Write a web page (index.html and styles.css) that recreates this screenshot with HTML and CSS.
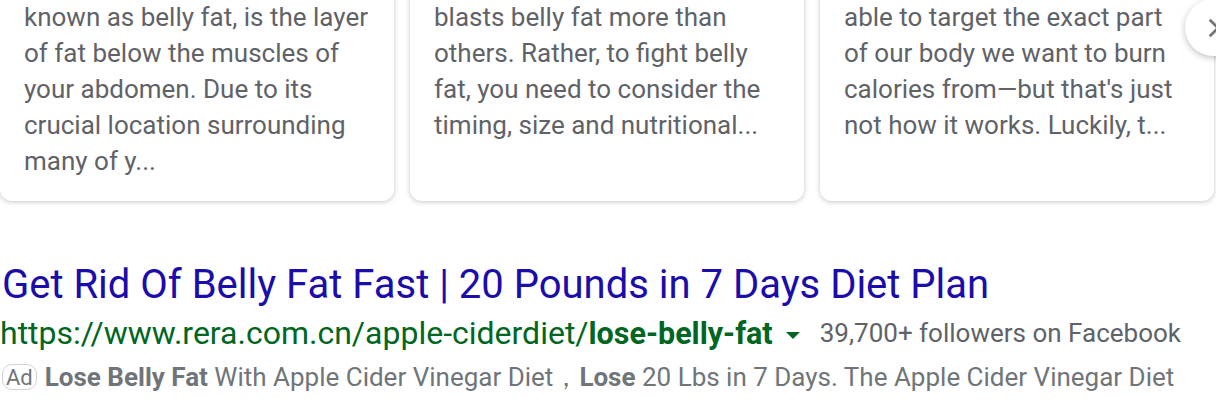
FILE: index.html
```html
<!DOCTYPE html>
<html lang="en">
<head>
<meta charset="utf-8">
<title>Belly fat results</title>
<link rel="stylesheet" href="styles.css">
</head>
<body>
<div class="page">
  <div class="carousel">
    <div class="card"><p class="snippet">known as belly fat, is the layer of fat below the muscles of your abdomen. Due to its crucial location surrounding many of y...</p></div>
    <div class="card"><p class="snippet">blasts belly fat more than others. Rather, to fight belly fat, you need to consider the timing, size and nutritional...</p></div>
    <div class="card"><p class="snippet">able to target the exact part of our body we want to burn calories from—but that's just not how it works. Luckily, t...</p></div>
    <button class="next" aria-label="Next">
      <svg viewBox="0 0 24 24" width="30" height="30"><path d="M8.6 5.4 15.2 12l-6.6 6.6" fill="none" stroke="#70757a" stroke-width="2.2"/></svg>
    </button>
  </div>
  <div class="ad">
    <a class="ad-title" href="#">Get Rid Of Belly Fat Fast | 20 Pounds in 7 Days Diet Plan</a>
    <div class="ad-url-row">
      <span class="ad-url">https://www.rera.com.cn/apple-ciderdiet/<b>lose-belly-fat</b></span>
      <span class="caret"></span>
      <span class="followers">39,700+ followers on Facebook</span>
    </div>
    <div class="ad-desc"><span class="badge">Ad</span><span><b>Lose Belly Fat</b> With Apple Cider Vinegar Diet，<b>Lose</b> 20 Lbs in 7 Days. The Apple Cider Vinegar Diet</span></div>
  </div>
</div>
</body>
</html>
```
FILE: styles.css
```css
html, body {
  margin: 0;
  padding: 0;
  background: #fff;
}
body {
  font-family: Roboto, "Liberation Sans", Arial, sans-serif;
  overflow: hidden;
}
.page {
  width: 1216px;
  height: 402px;
  overflow: hidden;
}
.carousel {
  position: relative;
  display: flex;
  gap: 16px;
  margin-top: -30px;
}
.card {
  width: 394px;
  flex: none;
  background: #fff;
  border-radius: 12px;
  box-shadow: 0 1px 5px rgba(32, 33, 36, 0.26);
  padding: 29px 24px 22px 24px;
  box-sizing: border-box;
}
.snippet {
  margin: 0;
  font-size: 26px;
  line-height: 36px;
  color: #5f6368;
}
.next {
  position: absolute;
  left: 1185px;
  top: 29px;
  width: 57px;
  height: 57px;
  border-radius: 50%;
  border: none;
  background: #fff;
  box-shadow: 0 2px 6px rgba(32, 33, 36, 0.28);
  padding: 0 0 0 14px;
  display: flex;
  align-items: center;
}
.ad {
  padding: 60px 0 0 2px;
}
.ad-title {
  display: block;
  font-size: 40px;
  line-height: 48px;
  color: #1a0dab;
  text-decoration: none;
}
.ad-url-row {
  display: flex;
  align-items: center;
  margin-top: 2px;
  height: 44px;
}
.ad-url {
  font-size: 32px;
  color: #006621;
  margin-left: -2px;
}
.ad-url b {
  font-weight: 700;
  font-size: 30.5px;
}
.caret {
  width: 0;
  height: 0;
  border-left: 7px solid transparent;
  border-right: 7px solid transparent;
  border-top: 7px solid #006621;
  margin: 4px 20px 0 13px;
}
.followers {
  font-size: 26px;
  color: #5f6368;
}
.ad-desc {
  display: flex;
  align-items: center;
  font-size: 26px;
  color: #70757a;
  height: 44px;
}
.ad-desc b {
  font-weight: 700;
}
.badge {
  display: inline-flex;
  align-items: center;
  justify-content: center;
  height: 24px;
  padding: 0 3px;
  border: 1px solid #d2d4d7;
  border-radius: 10px;
  font-size: 22px;
  margin-right: 8px;
  color: #70757a;
}
```
